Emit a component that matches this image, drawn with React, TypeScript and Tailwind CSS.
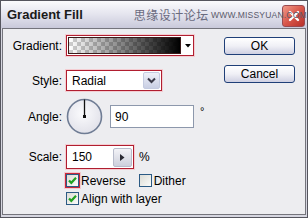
import React from 'react';

const font = { fontFamily: '"Liberation Sans", Arial, sans-serif' };

function CheckBox({ checked, marked }: { checked: boolean; marked?: boolean }) {
  return (
    <div
      className={`flex h-[15px] w-[15px] items-center justify-center ${
        marked ? 'border border-[#c8283a] shadow-[0_0_0_1px_#f3c9cf]' : 'border border-transparent'
      }`}
    >
      <div className="flex h-[13px] w-[13px] items-center justify-center border border-[#2b5a84] bg-gradient-to-br from-[#dcdcd6] to-[#fbfbf9]">
        {checked && (
          <svg width="11" height="11" viewBox="0 0 11 11">
            <path d="M2 5.5 L4.3 7.8 L9 2.8" fill="none" stroke="#21a121" strokeWidth="2.2" />
          </svg>
        )}
      </div>
    </div>
  );
}

function Row({ label, className, children }: { label: string; className: string; children: React.ReactNode }) {
  return (
    <div className={`flex items-center ${className}`}>
      <div className="w-[59px] text-right text-[12px] leading-none text-black">{label}</div>
      <div className="ml-[4px] flex items-center">{children}</div>
    </div>
  );
}

function XpButton({ label, className }: { label: string; className?: string }) {
  return (
    <div
      className={`flex h-[18px] w-[71px] items-center justify-center rounded-[3px] border border-[#1f3f78] bg-gradient-to-b from-[#ffffff] via-[#f0f0f6] to-[#cfd0e2] text-[12px] leading-none text-black ${className ?? ''}`}
    >
      {label}
    </div>
  );
}

export default function App() {
  return (
    <div style={font} className="flex h-[218px] w-[308px] flex-col border border-[#55555e] bg-[#d6d6e0]">
      {/* title bar */}
      <div className="relative flex h-[27px] items-center bg-gradient-to-b from-[#fbfbfd] via-[#e4e4ee] to-[#c9c9da] pl-[6px]">
        <div className="text-[13px] font-bold text-[#1a1a1a]">Gradient Fill</div>
        <div
          className="ml-[51px] text-[12px] tracking-[0.5px] text-[#6a6a7e]"
          style={{ fontFamily: '"Noto Sans CJK SC", sans-serif' }}
        >
          思缘设计论坛
        </div>
        <div className="absolute right-[2px] top-[4px] flex h-[22px] w-[23px] items-center justify-center rounded-[3px] border border-[#9a4a50] bg-gradient-to-br from-[#f09a8a] via-[#d8564a] to-[#b8302a]">
          <svg width="14" height="14" viewBox="0 0 14 14">
            <path d="M3 3 L11 11 M11 3 L3 11" stroke="#fff" strokeWidth="2.4" strokeLinecap="round" />
          </svg>
        </div>
        {/* watermark sits over the close button */}
        <div className="absolute left-[210px] top-[10px] text-[8.5px] leading-none tracking-[0.2px] text-[#5a5a6a]">
          WWW.MISSYUAN.COM
        </div>
      </div>

      {/* body */}
      <div className="mx-[1px] mb-[2px] flex flex-1 border border-[#74747c] bg-[#ededf0]">
        <div className="flex flex-1 flex-col pt-[6px]">
          <Row label="Gradient:" className="h-[21px]">
            <div className="flex h-[21px] w-[128px] border border-[#b01e30] bg-white shadow-[0_0_0_1px_#f4cdd2]">
              <div className="m-[1px] flex-1 border border-[#3a1a1a] bg-[conic-gradient(#cfcfcf_25%,#ffffff_0_50%,#cfcfcf_0_75%,#ffffff_0)] bg-[length:8px_8px]">
                <div className="h-full w-full bg-gradient-to-r from-transparent via-[#00000080] to-[#000000]" />
              </div>
              <div className="flex w-[11px] items-center justify-center">
                <svg width="6" height="4" viewBox="0 0 6 4">
                  <path d="M0 0 H6 L3 3.5 Z" fill="#000" />
                </svg>
              </div>
            </div>
          </Row>

          <Row label="Style:" className="mt-[14px] h-[21px]">
            <div className="flex h-[21px] w-[96px] items-center border border-[#b01e30] bg-white shadow-[0_0_0_1px_#f4cdd2]">
              <div className="flex-1 pl-[5px] text-[12px] leading-none">Radial</div>
              <div className="mr-[1px] flex h-[17px] w-[17px] items-center justify-center rounded-[2px] border border-[#c4cbe0] bg-gradient-to-b from-[#eef0f8] to-[#c9cfe4]">
                <svg width="9" height="7" viewBox="0 0 9 7">
                  <path d="M1 1.5 L4.5 5 L8 1.5" fill="none" stroke="#3a3a48" strokeWidth="2" />
                </svg>
              </div>
            </div>
          </Row>

          <Row label="Angle:" className="mt-[7px] h-[37px]">
            <svg width="37" height="37" viewBox="0 0 37 37">
              <defs>
                <radialGradient id="dial" cx="0.45" cy="0.4" r="0.6">
                  <stop offset="0" stopColor="#fbfbfd" />
                  <stop offset="1" stopColor="#e2e2ea" />
                </radialGradient>
              </defs>
              <circle cx="18.5" cy="18.5" r="17" fill="url(#dial)" stroke="#6f7c94" strokeWidth="1.6" />
              <line x1="18.5" y1="18.5" x2="18.5" y2="1.5" stroke="#111" strokeWidth="1.3" />
              <rect x="17" y="17" width="3" height="3" fill="#111" />
            </svg>
            <div className="ml-[7px] flex h-[23px] w-[84px] items-center border border-[#8d98ac] bg-white pl-[4px] text-[12px] leading-none">
              90
            </div>
            <div className="ml-[6px] -mt-[10px] text-[11px] leading-none">°</div>
          </Row>

          <Row label="Scale:" className="mt-[10px] h-[24px]">
            <div className="flex h-[24px] w-[68px] items-center border border-[#b01e30] bg-white shadow-[0_0_0_1px_#f4cdd2]">
              <div className="flex-1 pl-[5px] text-[12px] leading-none">150</div>
              <div className="mr-[1px] flex h-[19px] w-[19px] items-center justify-center rounded-[2px] border border-[#b8bccb] bg-gradient-to-b from-[#f3f3f7] to-[#cdd0dc]">
                <svg width="5" height="7" viewBox="0 0 5 7">
                  <path d="M0 0 L4.5 3.5 L0 7 Z" fill="#2a2a34" />
                </svg>
              </div>
            </div>
            <div className="ml-[5px] text-[12px] leading-none">%</div>
          </Row>

          <div className="ml-[62px] mt-[4px] flex h-[15px] items-center">
            <CheckBox checked marked />
            <div className="ml-[1px] text-[12px] leading-none">Reverse</div>
            <div className="ml-[12px] flex items-center">
              <CheckBox checked={false} />
              <div className="ml-[1px] text-[12px] leading-none">Dither</div>
            </div>
          </div>

          <div className="ml-[62px] mt-[3px] flex h-[15px] items-center">
            <CheckBox checked />
            <div className="ml-[1px] text-[12px] leading-none">Align with layer</div>
          </div>
        </div>

        <div className="flex flex-col pr-[10px] pt-[8px]">
          <XpButton label="OK" />
          <XpButton label="Cancel" className="mt-[10px]" />
        </div>
      </div>
    </div>
  );
}
